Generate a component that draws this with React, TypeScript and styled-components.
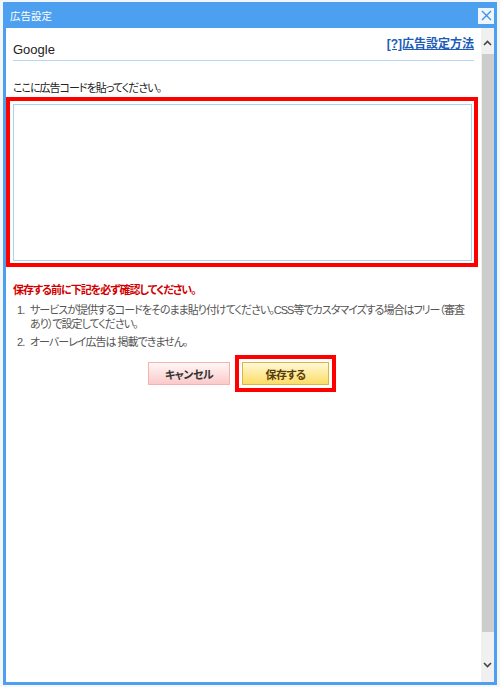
import React from 'react'
import styled, { createGlobalStyle } from 'styled-components'

const GlobalStyle = createGlobalStyle`
  html, body {
    margin: 0;
    padding: 0;
    background: #f3f6fa;
    font-family: "Liberation Sans", "Noto Sans CJK JP", sans-serif;
    font-feature-settings: "palt";
  }
`

const notes = [
  'サービスが提供するコードをそのまま貼り付けてください。CSS等でカスタマイズする場合はフリー（審査あり）で設定してください。',
  'オーバーレイ広告は 掲載できません。',
]

const App: React.FC = () => {
  return (
    <>
      <GlobalStyle />
      <Window>
        <TitleBar>
          <Title>広告設定</Title>
          <CloseBtn aria-label="close">
            <svg width="11" height="11" viewBox="0 0 11 11">
              <path d="M1 1 L10 10 M10 1 L1 10" stroke="#3d8fe0" strokeWidth="1.3" fill="none" />
            </svg>
          </CloseBtn>
        </TitleBar>
        <Body>
          <Content>
            <Header>
              <Provider>Google</Provider>
              <HelpLink href="#">[?]広告設定方法</HelpLink>
            </Header>
            <Prompt>ここに広告コードを貼ってください。</Prompt>
            <Highlight>
              <CodeArea />
            </Highlight>
            <Warning>保存する前に下記を必ず確認してください。</Warning>
            <NoteList>
              {notes.map((n, i) => (
                <NoteItem key={i}>
                  <NoteNum>{i + 1}.</NoteNum>
                  <span>{n}</span>
                </NoteItem>
              ))}
            </NoteList>
            <Actions>
              <Button $variant="cancel">キャンセル</Button>
              <SaveFrame>
                <Button $variant="save">保存する</Button>
              </SaveFrame>
            </Actions>
          </Content>
          <Scrollbar>
            <ScrollArrow>
              <svg width="9" height="6" viewBox="0 0 9 6">
                <path d="M1 5 L4.5 1.5 L8 5" stroke="#444" strokeWidth="1.6" fill="none" />
              </svg>
            </ScrollArrow>
            <Thumb />
            <ScrollArrow $bottom>
              <svg width="9" height="6" viewBox="0 0 9 6">
                <path d="M1 1 L4.5 4.5 L8 1" stroke="#444" strokeWidth="1.6" fill="none" />
              </svg>
            </ScrollArrow>
          </Scrollbar>
        </Body>
      </Window>
    </>
  )
}

export default App

// ---------- styles ----------
const Window = styled.div`
  margin: 2px 0 0 3px;
  width: 488px;
  height: 680px;
  border: 3px solid #4d9ff0;
  border-top: none;
  background: #fff;
  display: flex;
  flex-direction: column;
`

const TitleBar = styled.div`
  height: 26px;
  background: #4d9ff0;
  display: flex;
  align-items: center;
  justify-content: space-between;
  padding: 0 0 0 4px;
  flex-shrink: 0;
`

const Title = styled.span`
  color: #fff;
  font-size: 10.5px;
`

const CloseBtn = styled.button`
  width: 16px;
  height: 16px;
  margin-top: 1px;
  padding: 0;
  border: none;
  background: #eef5fd;
  display: flex;
  align-items: center;
  justify-content: center;
`

const Body = styled.div`
  flex: 1;
  display: flex;
  min-height: 0;
`

const Content = styled.div`
  flex: 1;
  display: flex;
  flex-direction: column;
  padding: 0 3px 0 0;
`

const Header = styled.div`
  box-sizing: border-box;
  height: 33px;
  margin: 0 4px 0 7px;
  display: flex;
  align-items: flex-end;
  justify-content: space-between;
  padding-bottom: 3px;
  border-bottom: 1px solid #b7d6f2;
`

const Provider = styled.span`
  font-size: 13px;
  color: #222;
`

const HelpLink = styled.a`
  font-size: 12px;
  font-weight: bold;
  color: #1d5cb8;
  text-decoration: underline;
  margin-bottom: 6px;
`

const Prompt = styled.div`
  margin: 20px 7px 0;
  font-size: 11px;
  letter-spacing: -1px;
  line-height: 14px;
  color: #222;
`

const Highlight = styled.div`
  box-sizing: border-box;
  margin-top: 2px;
  height: 170px;
  border: 4px solid #ff0000;
  padding: 3px 2px 2px 3px;
  display: flex;
`

const CodeArea = styled.textarea`
  flex: 1;
  resize: none;
  border: 1px solid #a9d4ee;
  margin: 0;
  padding: 0;
  outline: none;
`

const Warning = styled.div`
  margin: 16px 7px 0;
  font-size: 11px;
  letter-spacing: -1px;
  font-weight: bold;
  line-height: 14px;
  color: #d10000;
`

const NoteList = styled.ol`
  list-style: none;
  margin: 6px 7px 0 11px;
  padding: 0;
  display: flex;
  flex-direction: column;
  gap: 4px;
`

const NoteItem = styled.li`
  display: flex;
  font-size: 11px;
  letter-spacing: -1px;
  line-height: 14px;
  color: #555;
`

const NoteNum = styled.span`
  flex: 0 0 13px;
`

const Actions = styled.div`
  margin-top: 6px;
  display: flex;
  justify-content: center;
  align-items: center;
  gap: 5px;
`

const SaveFrame = styled.div`
  border: 4px solid #ff0000;
  padding: 3px;
  display: flex;
`

const Button = styled.button<{ $variant: 'cancel' | 'save' }>`
  height: 23px;
  width: ${(p) => (p.$variant === 'cancel' ? '82px' : '87px')};
  font-family: "Liberation Sans", "Noto Sans CJK JP", sans-serif;
  font-feature-settings: "palt";
  font-size: 11px;
  letter-spacing: -0.5px;
  font-weight: bold;
  padding: 0;
  color: ${(p) => (p.$variant === 'cancel' ? '#333' : '#5a3c0a')};
  border: 1px solid ${(p) => (p.$variant === 'cancel' ? '#f2b3b3' : '#d9b44a')};
  background: ${(p) =>
    p.$variant === 'cancel'
      ? 'linear-gradient(#fff6f6, #fbcaca)'
      : 'linear-gradient(#fff9d6, #fbdc66)'};
`

const Scrollbar = styled.div`
  width: 13px;
  background: #f0f0f0;
  display: flex;
  flex-direction: column;
`

const ScrollArrow = styled.div<{ $bottom?: boolean }>`
  height: 26px;
  display: flex;
  justify-content: center;
  align-items: ${(p) => (p.$bottom ? 'flex-start' : 'flex-end')};
  padding: ${(p) => (p.$bottom ? '6px 0 0' : '0 0 8px')};
  box-sizing: border-box;
`

const Thumb = styled.div`
  flex: 1;
  margin: 0 0 24px 1px;
  background: #cdcdcd;
`
